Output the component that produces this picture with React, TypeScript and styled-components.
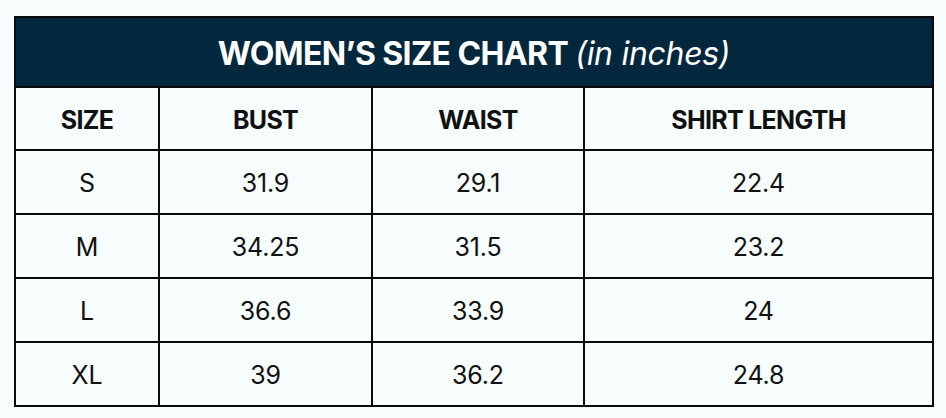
import React from "react";
import styled, { createGlobalStyle } from "styled-components";

const GlobalStyle = createGlobalStyle`
  html, body {
    margin: 0;
    padding: 0;
    background: #f7fcfd;
  }
  body {
    font-family: Inter, "Noto Sans", sans-serif;
    color: #111;
  }
`;

const Page = styled.div`
  padding: 16px 14px;
`;

const Table = styled.table`
  width: 918px;
  border-collapse: collapse;
  border: 2px solid #0b0b0b;
  table-layout: fixed;
`;

const Title = styled.th`
  height: 65px;
  padding: 3px 0 0;
  background: #03283d;
  color: #fff;
  font-size: 32px;
  font-weight: 700;
  letter-spacing: -0.6px;
  text-align: center;

  em {
    font-weight: 400;
    letter-spacing: -0.3px;
  }
`;

const HeadCell = styled.th`
  height: 58px;
  padding: 3px 0 0;
  border: 2px solid #0b0b0b;
  font-size: 25px;
  font-weight: 700;
  letter-spacing: -0.7px;
  text-align: center;
`;

const Cell = styled.td`
  height: 60px;
  padding: 2px 0 0;
  border: 2px solid #0b0b0b;
  font-size: 25px;
  font-weight: 400;
  letter-spacing: -0.2px;
  text-align: center;
`;

const columns = [
  { label: "SIZE", width: 144 },
  { label: "BUST", width: 213 },
  { label: "WAIST", width: 212 },
  { label: "SHIRT LENGTH", width: 349 },
];

const rows = [
  ["S", "31.9", "29.1", "22.4"],
  ["M", "34.25", "31.5", "23.2"],
  ["L", "36.6", "33.9", "24"],
  ["XL", "39", "36.2", "24.8"],
];

export default function App() {
  return (
    <Page>
      <GlobalStyle />
      <Table>
        <colgroup>
          {columns.map((c) => (
            <col key={c.label} style={{ width: c.width }} />
          ))}
        </colgroup>
        <thead>
          <tr>
            <Title colSpan={4}>
              WOMEN’S SIZE CHART <em>(in inches)</em>
            </Title>
          </tr>
          <tr>
            {columns.map((c) => (
              <HeadCell key={c.label}>{c.label}</HeadCell>
            ))}
          </tr>
        </thead>
        <tbody>
          {rows.map((r) => (
            <tr key={r[0]}>
              {r.map((v, i) => (
                <Cell key={i}>{v}</Cell>
              ))}
            </tr>
          ))}
        </tbody>
      </Table>
    </Page>
  );
}
